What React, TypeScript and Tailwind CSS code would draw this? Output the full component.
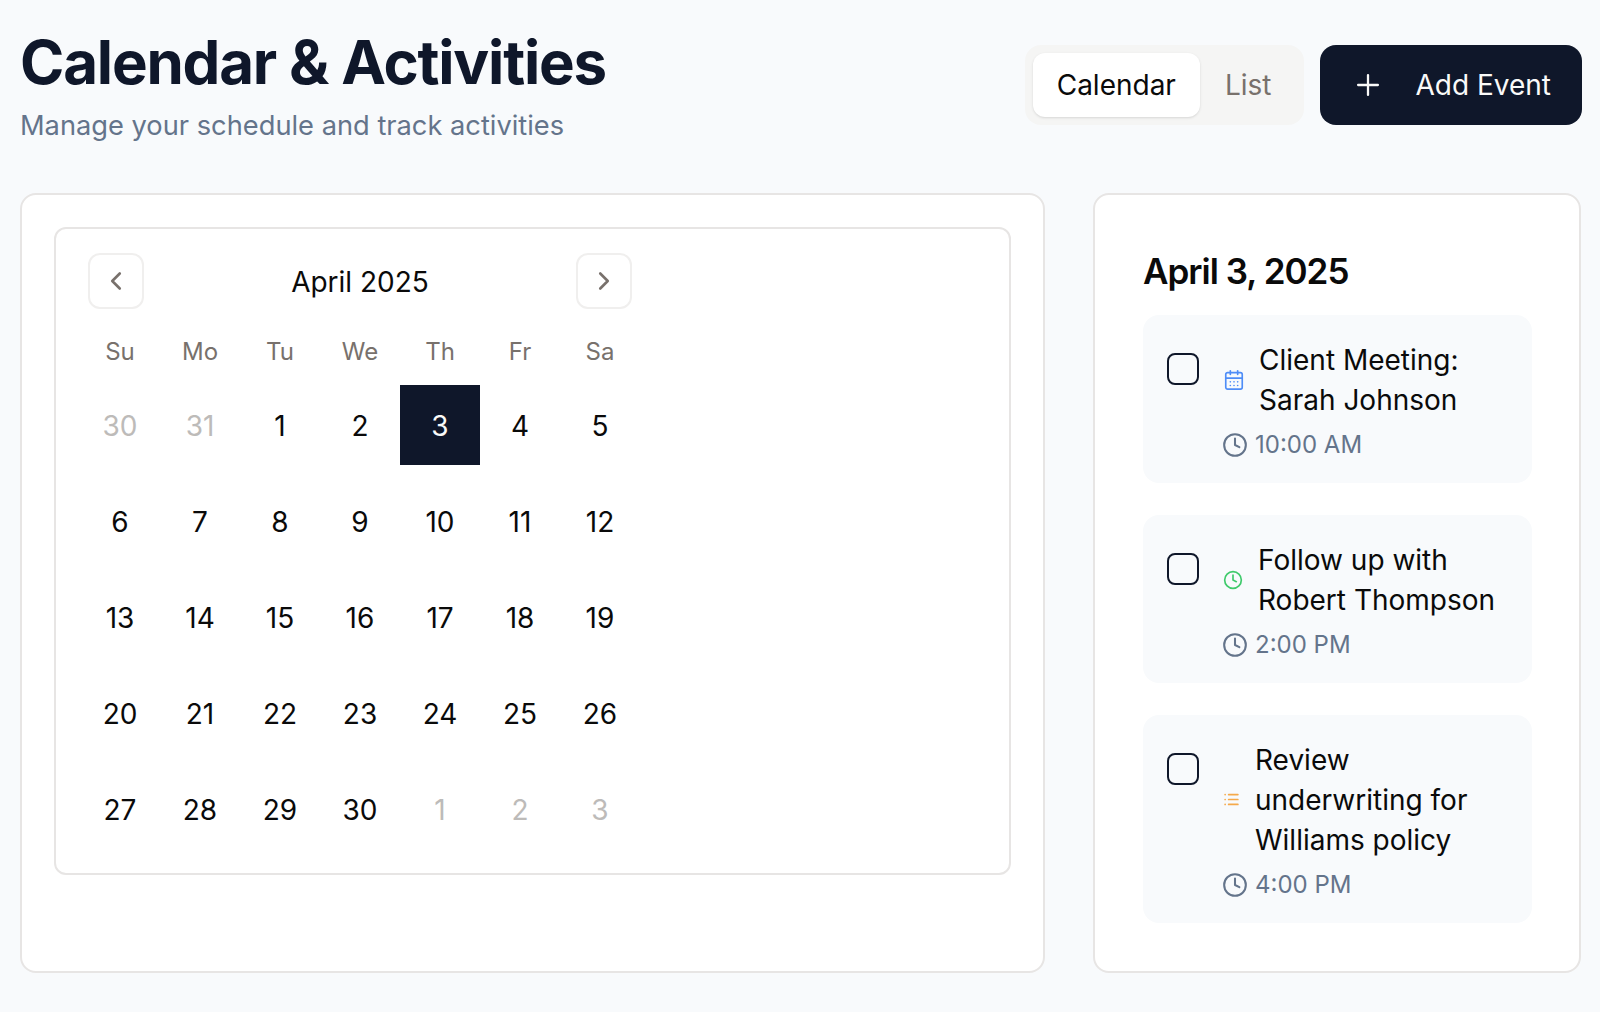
import { ChevronLeft, ChevronRight, Plus, Clock, CalendarDays, List } from "lucide-react";

const weeks: [string, boolean][][] = [
  [["30", true], ["31", true], ["1", false], ["2", false], ["3", false], ["4", false], ["5", false]],
  [["6", false], ["7", false], ["8", false], ["9", false], ["10", false], ["11", false], ["12", false]],
  [["13", false], ["14", false], ["15", false], ["16", false], ["17", false], ["18", false], ["19", false]],
  [["20", false], ["21", false], ["22", false], ["23", false], ["24", false], ["25", false], ["26", false]],
  [["27", false], ["28", false], ["29", false], ["30", false], ["1", true], ["2", true], ["3", true]],
];

function Item({ icon, lines, time, gap }: { icon: React.ReactNode; lines: string[]; time: string; gap: string }) {
  return (
    <div className="flex items-start gap-6 rounded-2xl bg-[#f8fafc] pt-6 pr-6 pb-[18px] pl-6">
      <div className="mt-[14px] h-8 w-8 shrink-0 rounded-lg border-2 border-[#0f172a]" />
      <div className="min-w-0 flex-1">
        <div className={`flex items-center ${gap}`}>
          {icon}
          <div className="pt-px text-[28px] leading-[40px] text-[#0a0a0a]">
            {lines.map((l) => (
              <div key={l}>{l}</div>
            ))}
          </div>
        </div>
        <div className="mt-[5px] flex items-center gap-[7px] text-[24px] leading-[40px] text-[#64748b]">
          <Clock size={26} strokeWidth={1.9} className="-ml-px" />
          <span>{time}</span>
        </div>
      </div>
    </div>
  );
}

export default function App() {
  return (
    <div className="min-h-[1012px] bg-[#f8fafc] pt-[20px] pr-[19px] pl-5 font-['Inter',sans-serif]">
      <div className="flex items-start justify-between">
        <div>
          <h1 className="text-[60px] leading-[84px] font-bold tracking-[-0.02em] text-[#0f172a]">Calendar &amp; Activities</h1>
          <p className="mt-[2px] text-[27.25px] leading-[40px] text-[#64748b]">Manage your schedule and track activities</p>
        </div>
        <div className="mt-[25px] -mr-px flex gap-4">
          <div className="flex h-20 rounded-2xl bg-[#f5f5f4] p-2">
            <div className="flex items-center rounded-xl bg-white px-6 text-[28px] text-[#0a0a0a] shadow-sm">Calendar</div>
            <div className="flex items-center pr-[25px] pl-[25px] text-[28px] text-[#78716c]">List</div>
          </div>
          <div className="flex h-20 items-center gap-[30px] rounded-2xl bg-[#0f172a] pr-[31px] pl-[31px] text-[28px] text-[#fafaf9]">
            <Plus size={34} strokeWidth={1.6} />
            <span>Add Event</span>
          </div>
        </div>
      </div>
      <div className="mt-[47px] flex gap-[48px]">
        <div className="h-[780px] flex-1 rounded-2xl border-2 border-[#e7e5e4] bg-white p-8">
          <div className="w-full rounded-xl border-2 border-[#e7e5e4] px-6 pt-6 pb-6">
            <div className="flex w-[560px] items-center justify-between px-2">
              <div className="flex h-14 w-14 items-center justify-center rounded-xl border-2 border-[#f0efee] text-[#78716c]">
                <ChevronLeft size={30} strokeWidth={2.1} />
              </div>
              <div className="pt-[2px] text-[28px] font-normal text-[#0a0a0a]">April 2025</div>
              <div className="flex h-14 w-14 items-center justify-center rounded-xl border-2 border-[#f0efee] text-[#78716c]">
                <ChevronRight size={30} strokeWidth={2.1} />
              </div>
            </div>
            <div className="mt-[22px] grid w-[560px] grid-cols-7">
              {["Su", "Mo", "Tu", "We", "Th", "Fr", "Sa"].map((d) => (
                <div key={d} className="flex h-10 items-center justify-center pt-[2px] text-[24px] font-normal text-[#78716c]">
                  {d}
                </div>
              ))}
            </div>
            <div className="mt-[14px] flex flex-col gap-4">
              {weeks.map((w, i) => (
                <div key={i} className="grid w-[560px] grid-cols-7">
                  {w.map(([d, out], j) => (
                    <div
                      key={j}
                      className={
                        i === 0 && d === "3"
                          ? "flex h-20 items-center justify-center bg-[#0f172a] pt-[2px] text-[28px] text-[#fafaf9]"
                          : out
                            ? "flex h-20 items-center justify-center pt-[2px] text-[28px] text-[#bdbbb9]"
                            : "flex h-20 items-center justify-center pt-[2px] text-[28px] text-[#0a0a0a]"
                      }
                    >
                      {d}
                    </div>
                  ))}
                </div>
              ))}
            </div>
          </div>
        </div>
        <div className="h-[780px] w-[488px] rounded-2xl border-2 border-[#e7e5e4] bg-white pt-[56px] pr-[47px] pl-12">
          <h2 className="text-[35px] leading-[40px] font-semibold tracking-[-0.028em] text-[#0a0a0a]">April 3, 2025</h2>
          <div className="mt-[24px] flex flex-col gap-8">
            <Item
              gap="gap-[14px]"
              icon={<CalendarDays size={22} strokeWidth={1.8} className="shrink-0 text-[#4f8df7]" />}
              lines={["Client Meeting:", "Sarah Johnson"]}
              time="10:00 AM"
            />
            <Item
              gap="gap-[15px]"
              icon={<Clock size={20} strokeWidth={2} className="shrink-0 text-[#3fca6b]" />}
              lines={["Follow up with", "Robert Thompson"]}
              time="2:00 PM"
            />
            <Item
              gap="gap-[15px]"
              icon={<List size={17} strokeWidth={2.4} className="shrink-0 text-[#f5a94a]" />}
              lines={["Review", "underwriting for", "Williams policy"]}
              time="4:00 PM"
            />
          </div>
        </div>
      </div>
    </div>
  );
}
